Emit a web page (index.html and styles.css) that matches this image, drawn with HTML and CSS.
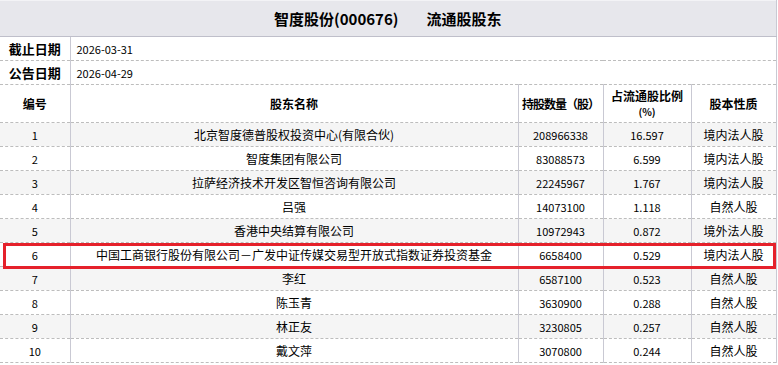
FILE: index.html
```html
<!DOCTYPE html>
<html lang="zh-CN">
<head>
<meta charset="utf-8">
<title>智度股份(000676) 流通股股东</title>
<link rel="stylesheet" href="styles.css">
</head>
<body>
<div class="wrap">
<table class="holders">
  <colgroup>
    <col class="c-no"><col class="c-name"><col class="c-num"><col class="c-pct"><col class="c-type">
  </colgroup>
  <thead>
    <tr class="title-row"><th colspan="5"><span>智度股份(000676)</span><span class="gap"></span><span>流通股股东</span></th></tr>
  </thead>
  <tbody>
    <tr class="date-row"><th class="lbl">截止日期</th><td colspan="4" class="date">2026-03-31</td></tr>
    <tr class="date-row"><th class="lbl">公告日期</th><td colspan="4" class="date">2026-04-29</td></tr>
    <tr class="head-row">
      <th>编号</th><th>股东名称</th><th class="tight">持股数量（股）</th>
      <th class="two"><span class="l1">占流通股比例</span><span class="l2">(%)</span></th>
      <th>股本性质</th>
    </tr>
    <tr class="odd"><td class="num">1</td><td>北京智度德普股权投资中心(有限合伙)</td><td class="num">208966338</td><td class="num">16.597</td><td>境内法人股</td></tr>
    <tr><td class="num">2</td><td>智度集团有限公司</td><td class="num">83088573</td><td class="num">6.599</td><td>境内法人股</td></tr>
    <tr class="odd"><td class="num">3</td><td>拉萨经济技术开发区智恒咨询有限公司</td><td class="num">22245967</td><td class="num">1.767</td><td>境内法人股</td></tr>
    <tr><td class="num">4</td><td>吕强</td><td class="num">14073100</td><td class="num">1.118</td><td>自然人股</td></tr>
    <tr class="odd"><td class="num">5</td><td>香港中央结算有限公司</td><td class="num">10972943</td><td class="num">0.872</td><td>境外法人股</td></tr>
    <tr class="hl"><td class="num">6</td><td>中国工商银行股份有限公司－广发中证传媒交易型开放式指数证券投资基金</td><td class="num">6658400</td><td class="num">0.529</td><td>境内法人股</td></tr>
    <tr class="odd"><td class="num">7</td><td>李红</td><td class="num">6587100</td><td class="num">0.523</td><td>自然人股</td></tr>
    <tr><td class="num">8</td><td>陈玉青</td><td class="num">3630900</td><td class="num">0.288</td><td>自然人股</td></tr>
    <tr class="odd"><td class="num">9</td><td>林正友</td><td class="num">3230805</td><td class="num">0.257</td><td>自然人股</td></tr>
    <tr><td class="num">10</td><td>戴文萍</td><td class="num">3070800</td><td class="num">0.244</td><td>自然人股</td></tr>
  </tbody>
</table>
<div class="mark"></div>
</div>
</body>
</html>
```

FILE: styles.css
```css
html, body {
  margin: 0;
  padding: 0;
  background: #ffffff;
}
body {
  font-family: "Noto Sans CJK SC", "Noto Sans", sans-serif;
  font-size: 12px;
  color: #000;
}
.wrap {
  position: relative;
  width: 778px;
}
.holders {
  border-collapse: collapse;
  table-layout: fixed;
  width: 776px;
}
.c-no { width: 70px; }
.c-name { width: 448px; }
.c-num { width: 85px; }
.c-pct { width: 88px; }
.c-type { width: 85px; }

.holders th, .holders td {
  padding: 0;
  text-align: center;
  vertical-align: middle;
  border-left: 1px solid #c9c9d3;
  border-right: 1px solid #c9c9d3;
  border-bottom: 1px dashed #bdbdbd;
  height: 23px;
  line-height: 14px;
  white-space: nowrap;
  overflow: hidden;
}
.holders tr > :first-child { border-left: none; }

.title-row th {
  height: 35px;
  background: #e7e7ec;
  border-top: 1px solid #f3f3f6;
  border-bottom: 1px solid #bfbfca;
  font-size: 15px;
  font-weight: bold;
}
.title-row .gap {
  display: inline-block;
  width: 28px;
}
.date-row .lbl {
  font-weight: bold;
  font-size: 13px;
}
.date-row .date {
  text-align: left;
  padding-left: 6px;
  font-size: 11px;
}
.head-row th {
  height: 37px;
  font-weight: bold;
}
.head-row .tight { letter-spacing: -1px; }
.head-row .two { vertical-align: top; padding-top: 2px; height: 35px; }
.head-row .two .l1 { display: block; line-height: 17px; }
.head-row .two .l2 { display: block; line-height: 15px; font-size: 10px; }

.num { font-size: 11px; }
.odd td { background: #f5f5f5; }

.mark {
  position: absolute;
  left: 3px;
  top: 243px;
  width: 767px;
  height: 20px;
  border: 3px solid #e5212b;
}
```
